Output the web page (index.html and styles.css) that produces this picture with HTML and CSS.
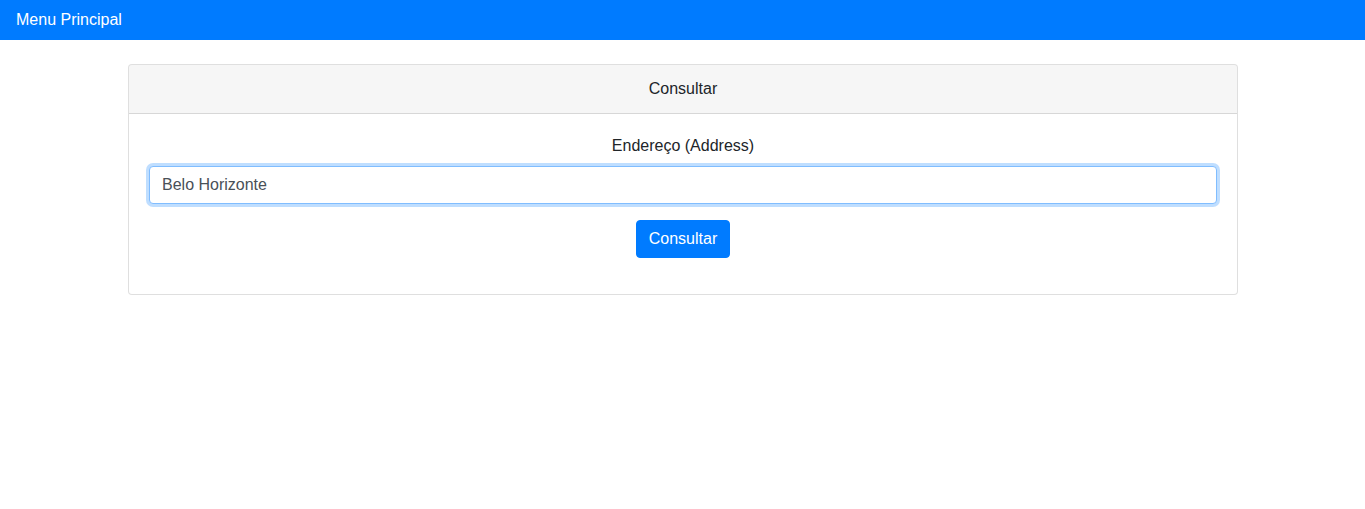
FILE: index.html
```html
<!DOCTYPE html>
<html lang="pt">
<head>
<meta charset="utf-8">
<title>Consultar</title>
<link rel="stylesheet" href="styles.css">
</head>
<body>
<nav class="navbar">
  <a class="brand" href="#">Menu Principal</a>
</nav>
<main class="container">
  <section class="card">
    <div class="card-header">Consultar</div>
    <div class="card-body">
      <form class="form">
        <div class="form-group">
          <label class="label" for="address">Endereço (Address)</label>
          <input class="input input-focus" id="address" type="text" value="Belo Horizonte">
        </div>
        <div class="form-group">
          <button class="btn" type="button">Consultar</button>
        </div>
      </form>
    </div>
  </section>
</main>
</body>
</html>
```

FILE: styles.css
```css
* { box-sizing: border-box; }
html, body { margin: 0; padding: 0; }
body {
  font-family: "Liberation Sans", Arial, Helvetica, sans-serif;
  font-size: 16px;
  line-height: 24px;
  color: #212529;
  background: #fff;
}
.navbar {
  background: #007bff;
  height: 40px;
  padding: 8px 16px;
  display: flex;
  align-items: center;
}
.brand {
  color: #fff;
  text-decoration: none;
  font-size: 16px;
  line-height: 24px;
}
.container {
  max-width: 1140px;
  margin: 0 auto;
  padding: 0 14.5px 0 15.5px;
}
.card {
  margin-top: 24px;
  border: 1px solid rgba(0,0,0,.125);
  border-radius: 4px;
  background: #fff;
  overflow: hidden;
}
.card-header {
  background: rgba(0,0,0,.035);
  border-bottom: 1px solid rgba(0,0,0,.125);
  padding: 12px 20px;
  text-align: center;
}
.card-body {
  padding: 20px;
}
.form { text-align: center; }
.form-group { margin-bottom: 16px; }
.label {
  display: inline-block;
  margin-bottom: 8px;
}
.input {
  display: block;
  width: 100%;
  height: 38px;
  padding: 6px 12px;
  font-family: inherit;
  font-size: 16px;
  line-height: 24px;
  color: #495057;
  background: #fff;
  border: 1px solid #ced4da;
  border-radius: 4px;
  text-align: left;
  outline: none;
}
.input-focus {
  border-color: #80bdff;
  box-shadow: 0 0 0 3px rgba(0,123,255,.25);
}
.btn {
  display: inline-block;
  height: 38px;
  padding: 6px 12px;
  font-family: inherit;
  font-size: 16px;
  line-height: 24px;
  color: #fff;
  background: #007bff;
  border: 1px solid #007bff;
  border-radius: 4px;
  cursor: pointer;
}
```
